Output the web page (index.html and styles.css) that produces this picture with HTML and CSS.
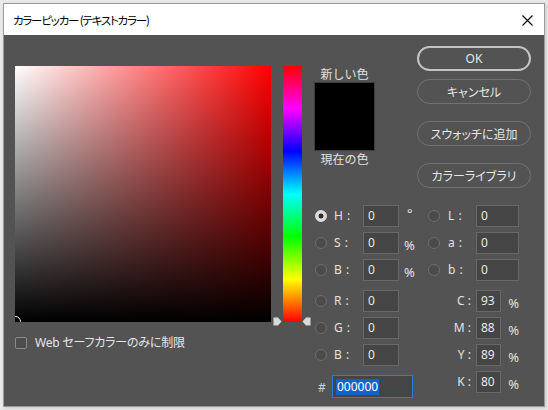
FILE: index.html
```html
<!DOCTYPE html>
<html lang="ja">
<head>
<meta charset="utf-8">
<title>カラーピッカー</title>
<link rel="stylesheet" href="styles.css">
</head>
<body>
<div class="window">
  <div class="titlebar">
    <span class="title">カラーピッカー (テキストカラー)</span>
    <svg class="close" width="11" height="11" viewBox="0 0 11 11"><path d="M0.5 0.5 L10.5 10.5 M10.5 0.5 L0.5 10.5" stroke="#000" stroke-width="1.1" fill="none"/></svg>
  </div>
  <div class="content">
    <div class="left">
      <div class="field"><div class="marker"></div></div>
      <div class="websafe"><span class="checkbox"></span><span class="wlabel">Web セーフカラーのみに制限</span></div>
    </div>
    <div class="hue">
      <svg class="arrow arrow-l" width="9" height="9" viewBox="0 0 9 9"><polygon points="0.5,0.5 5,0.5 8.5,4.5 5,8.5 0.5,8.5" fill="#d9d9d9"/></svg>
      <svg class="arrow arrow-r" width="9" height="9" viewBox="0 0 9 9"><polygon points="8.5,0.5 4,0.5 0.5,4.5 4,8.5 8.5,8.5" fill="#d9d9d9"/></svg>
    </div>
    <div class="right">
      <div class="toprow">
        <div class="preview">
          <div class="plabel">新しい色</div>
          <div class="swatch"></div>
          <div class="plabel">現在の色</div>
        </div>
        <div class="buttons">
          <div class="btn btn-ok">OK</div>
          <div class="btn">キャンセル</div>
          <div class="btn btn-gap">スウォッチに追加</div>
          <div class="btn btn-gap">カラーライブラリ</div>
        </div>
      </div>
      <div class="grid grid-hsb">
        <span class="radio on"></span><span class="lbl">H :</span><span class="inp">0</span><span class="unit deg">°</span>
        <span class="radio"></span><span class="lbl">L :</span><span class="inp wide">0</span>
        <span class="radio"></span><span class="lbl">S :</span><span class="inp">0</span><span class="unit">%</span>
        <span class="radio"></span><span class="lbl">a :</span><span class="inp wide">0</span>
        <span class="radio"></span><span class="lbl">B :</span><span class="inp">0</span><span class="unit">%</span>
        <span class="radio"></span><span class="lbl">b :</span><span class="inp wide">0</span>
      </div>
      <div class="grid grid-rgb">
        <span class="radio"></span><span class="lbl">R :</span><span class="inp">0</span><span class="empty"></span>
        <span class="clbl">C :</span><span class="cval"><span class="inp">93</span><span class="cunit">%</span></span>
        <span class="radio"></span><span class="lbl">G :</span><span class="inp">0</span><span class="empty"></span>
        <span class="clbl">M :</span><span class="cval"><span class="inp">88</span><span class="cunit">%</span></span>
        <span class="radio"></span><span class="lbl">B :</span><span class="inp">0</span><span class="empty"></span>
        <span class="clbl">Y :</span><span class="cval"><span class="inp">89</span><span class="cunit">%</span></span>
        <span class="hexrow"><span class="hash">#</span><span class="hex"><span class="sel">000000</span></span></span>
        <span class="clbl kstart">K :</span><span class="cval kstart"><span class="inp">80</span><span class="cunit">%</span></span>
      </div>
    </div>
  </div>
</div>
</body>
</html>
```

FILE: styles.css
```css
html, body {
  margin: 0;
  padding: 0;
}
body {
  background: #e9e9e9;
  font-family: "Noto Sans", "Noto Sans CJK JP", sans-serif;
  width: 548px;
  height: 410px;
  overflow: hidden;
}
.window {
  margin: 3px;
  width: 542px;
  height: 404px;
  box-sizing: border-box;
  border: 1px solid #9a9a9a;
  display: flex;
  flex-direction: column;
  box-shadow: 1px 1px 3px rgba(0, 0, 0, 0.15);
}
.titlebar {
  height: 31px;
  flex: none;
  background: #fff;
  display: flex;
  align-items: center;
  justify-content: space-between;
  padding: 0 11px 0 9px;
}
.title {
  font-family: "Noto Sans CJK JP", sans-serif;
  font-size: 11.5px;
  letter-spacing: -1.2px;
  color: #000;
  font-feature-settings: "palt" 1;
}
.close {
  display: block;
  margin-top: 1px;
}
.content {
  flex: 1;
  background: #535353;
  display: flex;
  align-items: flex-start;
  padding: 11px 0 0 11px;
  color: #e2e2e2;
  font-size: 12px;
}
.left {
  margin-top: 20px;
  display: flex;
  flex-direction: column;
}
.field {
  width: 256px;
  height: 256px;
  position: relative;
  overflow: hidden;
  background: linear-gradient(to top, #000, rgba(0, 0, 0, 0)), linear-gradient(to right, #fff, #f00);
}
.marker {
  position: absolute;
  left: -5px;
  top: 250px;
  width: 11px;
  height: 11px;
  box-sizing: border-box;
  border: 1.5px solid #fff;
  border-radius: 50%;
}
.websafe {
  margin-top: 13px;
  display: flex;
  align-items: center;
  gap: 8px;
}
.checkbox {
  width: 12px;
  height: 12px;
  box-sizing: border-box;
  border: 1px solid #8a8a8a;
  border-radius: 2px;
  background: #4d4d4d;
}
.wlabel {
  font-family: "Noto Sans", "Noto Sans CJK JP", sans-serif;
  font-size: 12px;
  line-height: 16px;
  color: #e4e4e4;
  letter-spacing: -0.2px;
  font-feature-settings: "palt" 1;
}
.hue {
  margin-top: 20px;
  margin-left: 12px;
  width: 19px;
  height: 256px;
  position: relative;
  background: linear-gradient(to bottom, #f00 0%, #f0f 16.67%, #00f 33.33%, #0ff 50%, #0f0 66.67%, #ff0 83.33%, #f00 100%);
}
.arrow {
  position: absolute;
  top: 251px;
  display: block;
}
.arrow-l {
  left: -10px;
}
.arrow-r {
  right: -9px;
}
.right {
  margin-left: 12px;
  display: flex;
  flex-direction: column;
}
.toprow {
  display: flex;
  align-items: flex-start;
}
.preview {
  margin-top: 20px;
  width: 61px;
  display: flex;
  flex-direction: column;
  align-items: center;
}
.plabel {
  font-family: "Noto Sans CJK JP", sans-serif;
  font-size: 12px;
  line-height: 16px;
  color: #e2e2e2;
}
.swatch {
  width: 61px;
  height: 69px;
  box-sizing: border-box;
  border: 1px solid #3c3c3c;
  background: #000;
}
.buttons {
  margin-left: 42px;
  display: flex;
  flex-direction: column;
  gap: 8px;
}
.btn {
  width: 114px;
  height: 25px;
  box-sizing: border-box;
  border: 1.5px solid #727272;
  border-radius: 13px;
  display: flex;
  align-items: center;
  justify-content: center;
  font-family: "Noto Sans", "Noto Sans CJK JP", sans-serif;
  font-size: 12px;
  color: #e6e6e6;
  font-feature-settings: "palt" 1;
}
.btn-ok {
  border: 2px solid #c4c4c4;
}
.btn-gap {
  margin-top: 9px;
}
.grid {
  display: grid;
  grid-template-columns: 19px 29px 36px 29px 20px 28px 43px;
  grid-auto-rows: auto;
  row-gap: 5px;
  margin-left: 1px;
  align-items: center;
}
.grid-hsb {
  margin-top: 17px;
}
.grid-rgb {
  margin-top: 9px;
}
.radio {
  width: 12px;
  height: 12px;
  box-sizing: border-box;
  border-radius: 50%;
  border: 1px solid #6e6e6e;
  background: #4b4b4b;
}
.radio.on {
  border: 1px solid #dcdcdc;
  background: radial-gradient(circle, #2e2e2e 0, #2e2e2e 2.2px, #dcdcdc 2.8px);
}
.lbl {
  line-height: 22px;
  color: #e2e2e2;
  letter-spacing: 0.5px;
}
.inp {
  height: 22px;
  width: 36px;
  box-sizing: border-box;
  border: 1px solid #686868;
  background: #454545;
  padding-left: 4px;
  line-height: 20px;
  color: #e8e8e8;
}
.inp.wide {
  width: 43px;
}
.unit {
  padding-left: 5px;
  padding-top: 4px;
  line-height: 18px;
  font-size: 13px;
  color: #e2e2e2;
}
.unit.deg {
  padding-left: 8px;
  padding-top: 0;
  align-self: start;
  line-height: 16px;
}
.clbl {
  grid-column: 5 / 7;
  text-align: right;
  padding-right: 5px;
  line-height: 22px;
  color: #e2e2e2;
}
.cval {
  display: flex;
  align-items: center;
}
.cunit {
  margin-left: 7px;
  padding-top: 3px;
  font-size: 13px;
  color: #e2e2e2;
}
.kstart {
  align-self: start;
}
.hexrow {
  grid-column: 1 / 5;
  margin-top: 4px;
  display: flex;
  align-items: center;
}
.hash {
  width: 17px;
  box-sizing: border-box;
  padding-left: 3px;
  color: #d0d0d0;
  padding-top: 2px;
}
.hex {
  width: 81px;
  height: 23px;
  box-sizing: border-box;
  border: 1px solid #2a7ce0;
  background: #454545;
  padding-left: 3px;
  display: flex;
  align-items: center;
}
.sel {
  background: #1265c8;
  color: #fff;
  line-height: 16px;
  padding: 0 1px;
}
```
